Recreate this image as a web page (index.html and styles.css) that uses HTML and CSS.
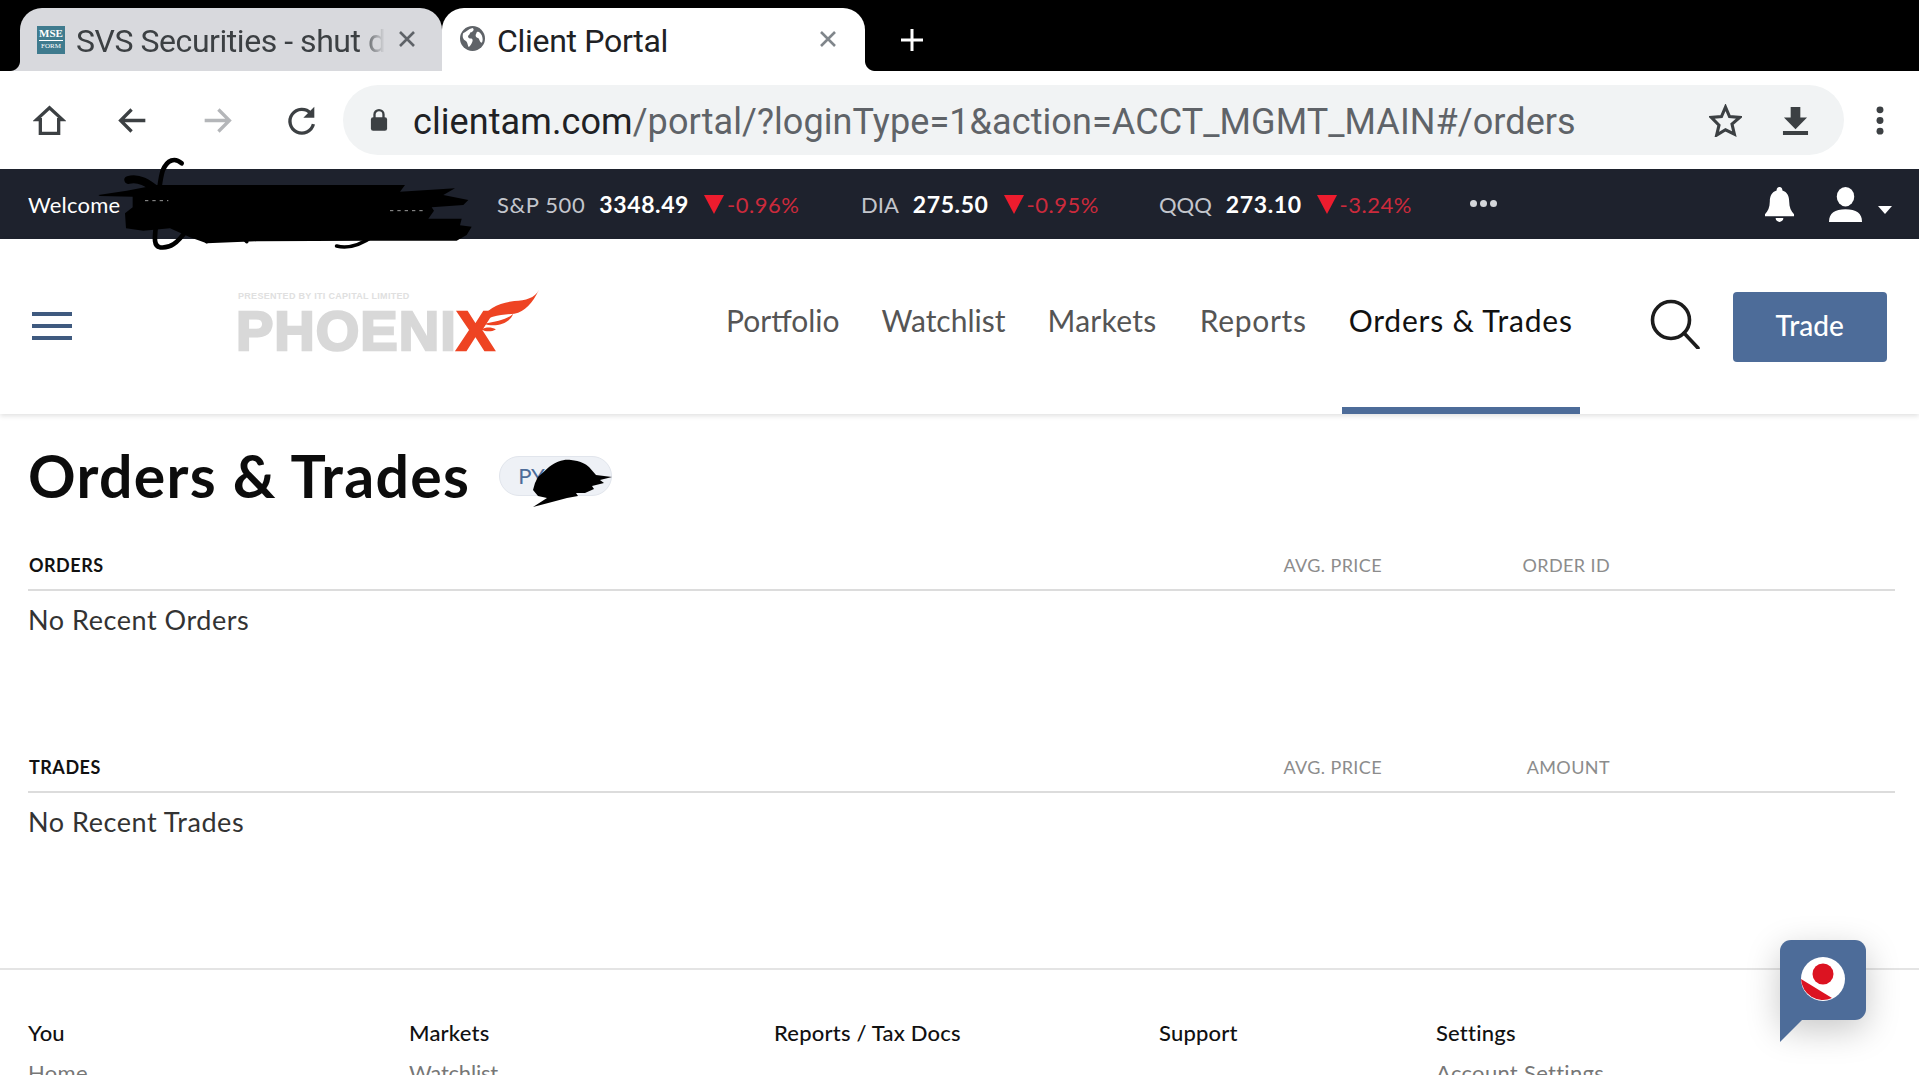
FILE: index.html
```html
<!DOCTYPE html>
<html lang="en">
<head>
<meta charset="utf-8">
<title>Client Portal</title>
<link rel="stylesheet" href="styles.css">
</head>
<body>
<div class="tabstrip">
  <div class="tab tab-bg">
    <span class="fav"><b>MSE</b><i>FORM</i></span>
    <span class="tab-title fade">SVS Securities - shut d</span>
    <svg class="tab-x" viewBox="0 0 20 20"><path d="M3 3l14 14M17 3L3 17"/></svg>
  </div>
  <div class="tab tab-active">
    <svg class="globe" viewBox="0 0 24 24"><circle cx="12" cy="12" r="12" fill="#5f6368"/><path d="M3 7c3-1 5-4 9-5 2 1 1 3-1 4-2 0-1 2-3 3-1 2 1 3 3 3 2 1 1 3 0 5-1 2-2 3-3 3-1-3-1-5-3-6-2-1-3-4-2-7zM16 6c2-1 3 0 5 3 1 3 1 5 0 7-2 0-2-2-3-4-1-1-3-1-3-3 0-1 1-2 1-3z" fill="#fff"/></svg>
    <span class="tab-title">Client Portal</span>
    <svg class="tab-x tab-x-push" viewBox="0 0 20 20"><path d="M3 3l14 14M17 3L3 17"/></svg>
  </div>
  <svg class="newtab" viewBox="0 0 24 24"><path d="M12 1v22M1 12h22"/></svg>
</div>

<div class="toolbar">
  <svg class="tool home" viewBox="0 0 36 36"><path d="M18 4L4 17h4v15h20V17h4z"/></svg>
  <svg class="tool back" viewBox="0 0 36 36"><path d="M32 18H6M17 6L5 18l12 12"/></svg>
  <svg class="tool fwd" viewBox="0 0 36 36"><path d="M4 18h26M19 6l12 12-12 12"/></svg>
  <svg class="tool reload" viewBox="0 0 36 36"><path d="M28 10a13 13 0 1 0 3 12"/><path class="solid" d="M32 3v12H20z"/></svg>
  <div class="omnibox">
    <svg class="lock" viewBox="0 0 20 26"><path d="M5 11V7a5 5 0 0 1 10 0v4" fill="none" stroke="#3c4043" stroke-width="2.6"/><rect x="1" y="10" width="18" height="15" rx="2.5" fill="#3c4043"/></svg>
    <span class="url"><span class="url-host">clientam.com</span>/portal/?loginType=1&amp;action=ACCT_MGMT_MAIN#/orders</span>
    <svg class="star" viewBox="0 0 32 32"><path d="M16 3l3.9 9.2 9.9.8-7.5 6.5 2.3 9.7L16 25l-8.6 5.2 2.3-9.7L2.2 13l9.9-.8z"/></svg>
    <svg class="dl" viewBox="0 0 28 30"><path d="M9 1h10v11h7L14 24 2 12h7zM1 26h26v4H1z"/></svg>
  </div>
  <svg class="kebab" viewBox="0 0 8 30"><circle cx="4" cy="4" r="3.6"/><circle cx="4" cy="15" r="3.6"/><circle cx="4" cy="26" r="3.6"/></svg>
</div>

<div class="ticker">
  <span class="welcome">Welcome</span>
  <div class="quotes">
    <div class="quote q1"><span class="sym sym-wide">S&amp;P 500</span><b class="px">3348.49</b><span class="tri"></span><span class="chg">-0.96%</span></div>
    <div class="quote q2"><span class="sym">DIA</span><b class="px">275.50</b><span class="tri"></span><span class="chg">-0.95%</span></div>
    <div class="quote q3"><span class="sym">QQQ</span><b class="px">273.10</b><span class="tri"></span><span class="chg">-3.24%</span></div>
    <div class="more"><i></i><i></i><i></i></div>
  </div>
  <svg class="bell" viewBox="0 0 32 36"><path d="M16 0c2 0 3 1.500 3 3.500C24 5 26 9 26 15c0 6 2 10 5 13v2H1v-2c3-3 5-7 5-13 0-6 2-10 7-11.500C13 1.500 14 0 16 0zM12 32h8c0 2.500-2 4-4 4s-4-1.500-4-4z"/></svg>
  <svg class="person" viewBox="0 0 34 36"><ellipse cx="17" cy="10" rx="9" ry="10"/><path d="M0 36c0-9 6-13 17-13s17 4 17 13z"/></svg>
  <span class="caret"></span>
</div>

<header class="nav">
  <div class="burger"><i></i><i></i><i></i></div>
  <div class="logo">
    <span class="logo-sub">PRESENTED BY ITI CAPITAL LIMITED</span>
    <span class="logo-word">PHOENI<span class="logo-x">X</span></span>
    <svg class="wing" viewBox="840 55 180 130"><path d="M1015 60C1002 84 978 90 945 92 905 96 866 110 846 155 870 136 905 130 945 128 975 122 996 98 1015 60zM942 128C925 144 895 150 860 156 885 166 930 160 942 128zM852 172C865 165 880 165 893 172 880 179 865 179 852 172z"/></svg>
  </div>
  <nav class="menu">
    <a class="menu-item">Portfolio</a>
    <a class="menu-item">Watchlist</a>
    <a class="menu-item menu-markets">Markets</a>
    <a class="menu-item menu-reports">Reports</a>
    <a class="menu-item current">Orders &amp; Trades</a>
  </nav>
  <svg class="search" viewBox="0 0 50 50"><circle cx="21" cy="21" r="18.500"/><path d="M34 34l14 15"/></svg>
  <button class="trade">Trade</button>
</header>

<main class="main">
  <div class="title-row">
    <h1 class="title">Orders &amp; Trades</h1>
    <span class="pill">PY</span>
  </div>
  <section class="block">
    <div class="thead"><span class="th-main">ORDERS</span><span class="th th-a">AVG. PRICE</span><span class="th th-b">ORDER ID</span></div>
    <p class="empty">No Recent Orders</p>
  </section>
  <section class="block">
    <div class="thead"><span class="th-main">TRADES</span><span class="th th-a">AVG. PRICE</span><span class="th th-b">AMOUNT</span></div>
    <p class="empty">No Recent Trades</p>
  </section>
</main>

<footer class="footer">
  <div class="fcol"><h4>You</h4><a>Home</a></div>
  <div class="fcol"><h4>Markets</h4><a class="tight">Watchlist</a></div>
  <div class="fcol"><h4>Reports / Tax Docs</h4></div>
  <div class="fcol"><h4>Support</h4></div>
  <div class="fcol"><h4>Settings</h4><a>Account Settings</a></div>
</footer>

<svg class="scribble s-name" viewBox="0 0 1200 330">
  <g fill="none" stroke="#000" stroke-linecap="round">
    <path stroke-width="14" d="M275 40C255 22 232 28 218 62 204 110 204 170 198 225 194 262 190 288 210 292 240 296 262 280 290 240"/>
    <path stroke-width="24" d="M115 90C145 80 175 100 205 125"/>
    <path stroke-width="11" d="M350 275C380 225 420 215 470 275M740 288C770 296 810 286 850 258"/>
  </g>
  <path fill="#000" d="M25 135L110 122 200 105H945L930 125 1095 115 1060 135 1135 150 1120 165 1025 172 1032 182 1015 206 1115 206 1110 226 1145 230 1130 255 1100 272H880L840 272 500 274 350 280 300 262 240 235 160 242 108 235 105 190 128 172 128 140 30 138z"/>
  <path fill="none" stroke="#b8b8b8" stroke-width="2.500" stroke-dasharray="10 12" d="M165 152h70M900 182h105"/>
</svg>
<svg class="scribble s-pill" viewBox="0 0 85 52">
  <path fill="#000" d="M19 9C27 3 34 1 41 2 50 3 56 6 59 9L66 17 82 19 70 22 74 25 62 28 64 31 55 35 46 35 48 38 37 40 22 44 3 49 17 40 8 38 3 32 5 25 8 19z"/>
</svg>

<div class="chat">
  <svg class="chat-mark" viewBox="0 0 44 44"><circle cx="22" cy="22" r="22" fill="#fff"/><circle cx="22" cy="17" r="10.500" fill="#dc1321"/><path d="M0 22L31 41A22 22 0 0 1 0 22z" fill="#dc1321"/></svg>
</div>
```

FILE: styles.css
```css
* { box-sizing: border-box; }
html, body { margin: 0; padding: 0; height: 1075px; overflow: hidden; background: #fff; }
body { position: relative; font-family: Lato, "Open Sans", sans-serif; color: #111; }
svg { display: block; flex: none; }

.tabstrip { height: 71px; background: #000; display: flex; align-items: flex-end; padding-left: 20px; }
.tab { height: 63px; display: flex; align-items: center; border-radius: 22px 22px 0 0; font-family: Roboto, sans-serif; font-size: 32px; position: relative; }
.tab-bg { width: 422px; background: #d8d9dd; padding-left: 17px; color: #3c4043; }
.tab-bg .tab-title { letter-spacing: -0.45px; }
.tab-bg::before { content: ""; position: absolute; left: -10px; bottom: 0; width: 10px; height: 10px; background: radial-gradient(circle at 0 0, #000 9.500px, #d8d9dd 10.500px); }
.tab-active { width: 423px; background: #fff; padding-left: 18px; color: #202124; }
.tab-active::after { content: ""; position: absolute; right: -10px; bottom: 0; width: 10px; height: 10px; background: radial-gradient(circle at 100% 0, #000 9.500px, #fff 10.500px); }
.fav { width: 28px; height: 28px; background: #3f7b8e; color: #fff; display: flex; flex-direction: column; align-items: center; font-family: "Liberation Serif", serif; flex: none; overflow: hidden; }
.fav b { font-size: 11px; line-height: 14px; font-weight: 700; border-bottom: 1px solid #fff; }
.fav i { font-size: 7px; line-height: 11px; font-style: normal; }
.tab-title { margin-left: 12px; padding-top: 2px; white-space: nowrap; letter-spacing: -0.3px; }
.fade { width: 309px; margin-left: 11px; -webkit-mask-image: linear-gradient(90deg, #000 92%, transparent 100%); mask-image: linear-gradient(90deg, #000 92%, transparent 100%); }
.globe { width: 25px; height: 25px; margin-bottom: 2px; }
.tab-x { width: 20px; height: 20px; fill: none; stroke: #5f6368; stroke-width: 2.600; margin-left: 12px; margin-bottom: 2px; }
.tab-x-push { margin-left: auto; margin-right: 27px; stroke: #80868b; }
.newtab { width: 24px; height: 24px; margin: 0 0 19px 35px; fill: none; stroke: #fff; stroke-width: 3; }

.toolbar { height: 98px; background: #fff; display: flex; align-items: center; padding-left: 33px; }
.tool { width: 33px; height: 33px; fill: none; stroke: #3c4043; stroke-width: 3.600; }
.home { margin-right: 50px; }
.back { margin-right: 52px; }
.fwd { margin-right: 51px; stroke: #b4b6b9; }
.reload { margin-right: 25px; }
.reload .solid { fill: #3c4043; stroke: none; }
.omnibox { width: 1501px; height: 70px; border-radius: 35px; background: #f1f3f4; display: flex; align-items: center; padding-left: 27px; }
.lock { width: 18px; height: 24px; }
.url { margin-left: 25px; padding-top: 4px; font-family: Roboto, sans-serif; font-size: 36px; color: #5f6368; white-space: nowrap; letter-spacing: 0.08px; }
.url-host { color: #202124; }
.star { width: 33px; height: 33px; margin-left: auto; fill: none; stroke: #3c4043; stroke-width: 3; }
.dl { width: 27px; height: 29px; margin: 0 35px 0 40px; fill: #3c4043; }
.kebab { width: 8px; height: 29px; margin-left: 32px; fill: #3c4043; }

.ticker { height: 70px; background: #1e222d; display: flex; align-items: center; padding-left: 28px; color: #fff; font-size: 22px; }
.welcome { width: 469px; font-size: 22px; letter-spacing: .2px; }
.quotes { display: flex; align-items: center; }
.quote { display: flex; align-items: center; }
.q1 { width: 364px; }
.q2 { width: 298px; }
.q3 { width: 311px; }
.sym { color: #c3c6cc; margin-right: 14px; }
.sym-wide { letter-spacing: .6px; }
.px { font-weight: 700; font-size: 23px; margin-right: 15px; letter-spacing: .6px; }
.tri { width: 0; height: 0; border-left: 10px solid transparent; border-right: 10px solid transparent; border-top: 19px solid #ed1c2e; margin-right: 3px; }
.chg { color: #cc2a3c; letter-spacing: .5px; }
.more { display: flex; gap: 3px; margin-bottom: 2px; }
.more i { width: 7px; height: 7px; border-radius: 50%; background: #d5d7da; }
.bell { width: 31px; height: 35px; fill: #fff; margin-left: 267px; }
.person { width: 33px; height: 35px; fill: #fff; margin-left: 34px; }
.caret { width: 0; height: 0; border-left: 7px solid transparent; border-right: 7px solid transparent; border-top: 8px solid #fff; margin: 12px 0 0 16px; }

.nav { height: 175px; display: flex; align-items: flex-start; padding-left: 32px; position: relative; box-shadow: 0 2px 5px rgba(0,0,0,.12); background: #fff; z-index: 1; }
.burger { width: 40px; margin-top: 73px; display: flex; flex-direction: column; gap: 8px; }
.burger i { height: 4px; background: #3f5a7f; display: block; }
.logo { width: 300px; height: 62px; margin: 51px 0 0 166px; position: relative; flex: none; }
.logo-sub { position: absolute; left: 0; top: 1px; font-family: "Liberation Sans", sans-serif; font-weight: 700; font-size: 9px; line-height: 10px; color: #e0e0e0; letter-spacing: .3px; white-space: nowrap; }
.logo-word { position: absolute; left: -2px; bottom: 1px; font-family: "Liberation Sans", sans-serif; font-weight: 700; font-size: 56px; line-height: 40px; color: #d8d8d8; -webkit-text-stroke: 2.500px #d8d8d8; white-space: nowrap; letter-spacing: 1px; }
.logo-x { color: #ee4423; -webkit-text-stroke-color: #ee4423; }
.wing { position: absolute; right: -3px; top: -2px; width: 64px; height: 46px; fill: #ee4423; }
.menu { display: flex; gap: 28px; margin-left: 181px; height: 175px; }
.menu-item { padding: 59px 7px 0; font-size: 30px; line-height: 44px; color: #555; white-space: nowrap; }
.menu-markets { letter-spacing: .3px; margin-right: 1px; }
.menu-reports { letter-spacing: .7px; }
.menu-item.current { color: #111; border-bottom: 7px solid #4d6c99; letter-spacing: .8px; }
.search { width: 50px; height: 50px; margin: 60px 0 0 70px; fill: none; stroke: #1c1c1c; stroke-width: 3.600; stroke-linecap: round; }
.trade { width: 154px; height: 70px; margin: 53px 0 0 33px; padding: 0 0 4px; background: #4d6c99; color: #fff; border: 0; border-radius: 4px; font-family: Lato, sans-serif; font-size: 28px; font-weight: 500; }

.main { padding: 0 24px 0 28px; height: 554px; }
.title-row { display: flex; align-items: center; padding-top: 6px; height: 117px; }
.title { margin: 0; font-size: 59px; line-height: 68px; font-weight: 700; color: #0c0c0c; letter-spacing: 1.300px; }
.pill { width: 113px; height: 40px; margin-left: 29px; border-radius: 20px; background: #eef1f6; border: 1px solid #e1e5ec; color: #4d6c99; font-size: 22px; line-height: 38px; padding-left: 18px; }
.block { height: 202px; }
.thead { height: 60px; padding-top: 23px; position: relative; display: flex; border-bottom: 2px solid #dcdcdc; font-size: 18px; line-height: 22px; }
.th-main { font-weight: 700; color: #111; font-size: 18px; letter-spacing: .5px; padding-left: 1px; }
.th { position: absolute; top: 23px; color: #8c8c8c; white-space: nowrap; letter-spacing: .4px; }
.th-a { right: 513px; }
.th-b { right: 285px; }
.empty { margin: 13px 0 0; font-size: 27px; line-height: 32px; color: #333; letter-spacing: .55px; }

.footer { border-top: 2px solid #e4e4e4; height: 108px; padding: 49px 0 0 28px; display: grid; grid-template-columns: 381px 365px 385px 277px 1fr; overflow: hidden; }
.fcol h4 { margin: 0 0 12px; font-size: 22px; line-height: 28px; font-weight: 500; color: #111; letter-spacing: .2px; }
.fcol a { display: block; font-size: 22px; line-height: 28px; color: #777; letter-spacing: .3px; }
.fcol a.tight { letter-spacing: -.2px; }

.scribble { position: absolute; z-index: 3; }
.s-name { left: 90px; top: 150px; width: 400px; height: 110px; }
.s-pill { left: 530px; top: 458px; width: 85px; height: 52px; }
.chat { position: absolute; left: 1780px; top: 940px; width: 86px; height: 80px; background: #4d6c99; border-radius: 11px 11px 11px 0; box-shadow: 0 10px 34px rgba(0,0,0,.22); display: flex; align-items: flex-start; justify-content: center; padding-top: 17px; z-index: 4; }
.chat::after { content: ""; position: absolute; left: 0; top: 80px; width: 0; height: 0; border-top: 22px solid #4d6c99; border-right: 22px solid transparent; }
.chat-mark { width: 44px; height: 44px; }
```
